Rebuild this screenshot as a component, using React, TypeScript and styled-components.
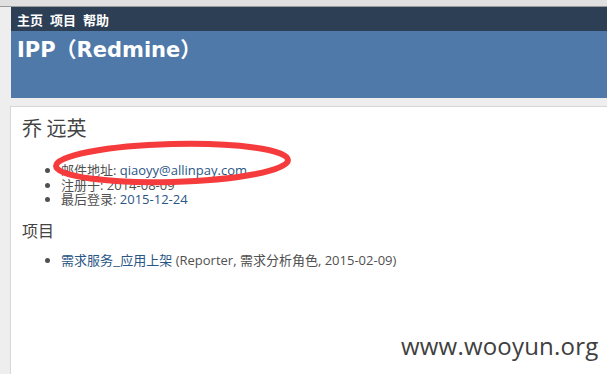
import React from "react";
import styled, { createGlobalStyle } from "styled-components";

const Global = createGlobalStyle`
  html, body { margin: 0; padding: 0; background: #eeeeee; }
  body { font-family: "Open Sans", "Noto Sans CJK SC", sans-serif; font-size: 13px; color: #505050; }
  #root { position: relative; height: 374px; overflow: hidden; }
`;

const TopStrip = styled.div`
  height: 6px;
  background: #e0e0e0;
  border-bottom: 1px solid #9a9a9a;
`;

const Column = styled.div`
  margin-left: 10px;
  display: flex;
  flex-direction: column;
`;

const Nav = styled.nav`
  margin-left: 1px;
  height: 24px;
  background: #2c3f55;
  display: flex;
  align-items: center;
  gap: 7px;
  padding-left: 6px;
`;

const NavItem = styled.a`
  color: #fff;
  font-weight: bold;
  font-size: 13px;
  font-family: "Noto Sans CJK SC", sans-serif;
  text-decoration: none;
`;

const Header = styled.header`
  margin-left: 1px;
  height: 67px;
  background: #4f79a9;
  padding: 4px 6px 0;
  box-sizing: border-box;
`;

const Title = styled.h1`
  margin: 0;
  color: #fff;
  font-family: "DejaVu Sans", "Noto Sans CJK SC", sans-serif;
  font-weight: bold;
  font-size: 21px;
  line-height: 30px;
`;

const Content = styled.main`
  margin-top: 8px;
  background: #fff;
  border: 1px solid #d7d7d7;
  border-right: none;
  height: 300px;
  padding: 8px 11px;
`;

const Name = styled.h2`
  margin: 0;
  font-family: "Noto Sans CJK SC", serif;
  font-weight: normal;
  font-size: 20px;
  line-height: 26px;
  color: #444;
`;

const Section = styled.h3`
  margin: 13px 0 0;
  font-family: "Noto Sans CJK SC", sans-serif;
  font-weight: normal;
  font-size: 16px;
  line-height: 20px;
  color: #444;
`;

const List = styled.ul<{ $top: number }>`
  margin: ${(p) => p.$top}px 0 0;
  padding-left: 39px;
  list-style: disc;
  line-height: 14.5px;
  li::marker { color: #505050; }
`;

const Link = styled.a`
  color: #2a5685;
  text-decoration: none;
`;

const Label = styled.span`
  font-family: "Noto Sans CJK SC", sans-serif;
`;

const Mark = styled.svg`
  position: absolute;
  left: 50px;
  top: 136px;
  pointer-events: none;
`;

const Watermark = styled.div`
  position: absolute;
  left: 401px;
  top: 329px;
  font-family: "Open Sans", sans-serif;
  font-size: 24px;
  color: #404040;
  letter-spacing: 0.2px;
`;

export default function App() {
  return (
    <>
      <Global />
      <TopStrip />
      <Column>
        <Nav>
          <NavItem>主页</NavItem>
          <NavItem>项目</NavItem>
          <NavItem>帮助</NavItem>
        </Nav>
        <Header>
          <Title>IPP（Redmine）</Title>
        </Header>
        <Content>
          <Name>乔 远英</Name>
          <List $top={22}>
            <li>
              <Label>邮件地址</Label>: <Link>qiaoyy@allinpay.com</Link>
            </li>
            <li>
              <Label>注册于</Label>: 2014-08-09
            </li>
            <li>
              <Label>最后登录</Label>: <Link>2015-12-24</Link>
            </li>
          </List>
          <Section>项目</Section>
          <List $top={13}>
            <li>
              <Link>
                <Label>需求服务_应用上架</Label>
              </Link>{" "}
              (Reporter, <Label>需求分析角色</Label>, 2015-02-09)
            </li>
          </List>
        </Content>
      </Column>
      <Mark width="250" height="56" viewBox="0 0 250 56">
        <ellipse
          cx="122"
          cy="27"
          rx="116"
          ry="19"
          fill="none"
          stroke="#f53b3b"
          strokeWidth="6"
          transform="rotate(-1.5 122 27)"
        />
      </Mark>
      <Watermark>www.wooyun.org</Watermark>
    </>
  );
}
